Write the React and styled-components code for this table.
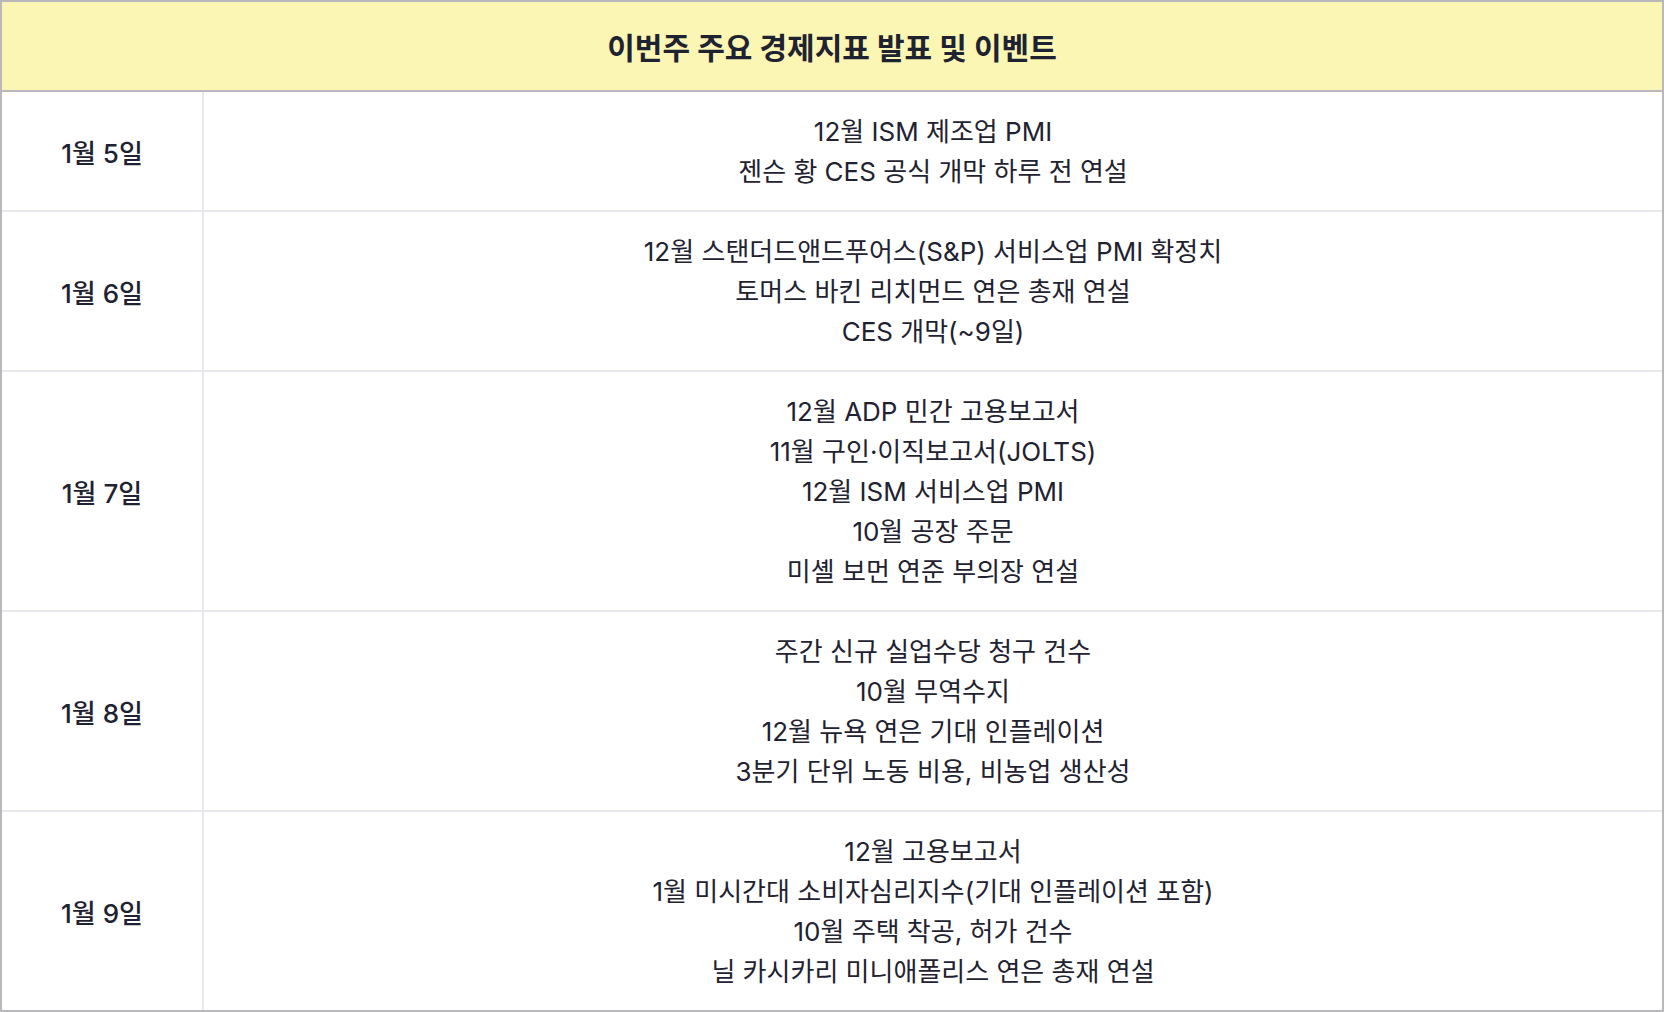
import styled, { createGlobalStyle } from "styled-components";

const GlobalStyle = createGlobalStyle`
	* { box-sizing: border-box; }
	body {
		margin: 0;
		background: #fff;
		font-family: "Inter", "Noto Sans CJK KR", sans-serif;
		color: #1f2230;
	}
`;

const events = [
	{ date: "1월 5일", items: ["12월 ISM 제조업 PMI", "젠슨 황 CES 공식 개막 하루 전 연설"] },
	{
		date: "1월 6일",
		items: [
			"12월 스탠더드앤드푸어스(S&P) 서비스업 PMI 확정치",
			"토머스 바킨 리치먼드 연은 총재 연설",
			"CES 개막(~9일)",
		],
	},
	{
		date: "1월 7일",
		items: [
			"12월 ADP 민간 고용보고서",
			"11월 구인·이직보고서(JOLTS)",
			"12월 ISM 서비스업 PMI",
			"10월 공장 주문",
			"미셸 보먼 연준 부의장 연설",
		],
	},
	{
		date: "1월 8일",
		items: [
			"주간 신규 실업수당 청구 건수",
			"10월 무역수지",
			"12월 뉴욕 연은 기대 인플레이션",
			"3분기 단위 노동 비용, 비농업 생산성",
		],
	},
	{
		date: "1월 9일",
		items: [
			"12월 고용보고서",
			"1월 미시간대 소비자심리지수(기대 인플레이션 포함)",
			"10월 주택 착공, 허가 건수",
			"닐 카시카리 미니애폴리스 연은 총재 연설",
		],
	},
];

export default function App() {
	return (
		<>
			<GlobalStyle />
			<Table>
				<Header>이번주 주요 경제지표 발표 및 이벤트</Header>
				{events.map((ev, i) => (
					<Row key={ev.date} last={i === events.length - 1}>
						<DateCell>{ev.date}</DateCell>
						<EventCell>
							{ev.items.map((item) => (
								<Line key={item}>{item}</Line>
							))}
						</EventCell>
					</Row>
				))}
			</Table>
		</>
	);
}

const Table = styled.div`
	width: 1664px;
	border: 2px solid #b9b9bd;
	display: flex;
	flex-direction: column;
`;

const Header = styled.div`
	height: 90px;
	background: #fbf6b4;
	border-bottom: 2px solid #b9b9bd;
	display: flex;
	align-items: center;
	justify-content: center;
	font-size: 30px;
	font-weight: 700;
	color: #1f2230;
`;

const Row = styled.div`
	display: grid;
	grid-template-columns: 202px 1fr;
	border-bottom: ${(p) => (p.last ? "none" : "2px solid #e6e8ee")};
`;

const DateCell = styled.div`
	display: flex;
	align-items: center;
	justify-content: center;
	border-right: 2px solid #e6e8ee;
	font-size: 26px;
	font-weight: 500;
`;

const EventCell = styled.div`
	padding: 20px 16px 18px;
	display: flex;
	flex-direction: column;
	align-items: center;
	text-align: center;
	font-size: 26px;
	font-weight: 400;
`;

const Line = styled.div`
	line-height: 40px;
`;
